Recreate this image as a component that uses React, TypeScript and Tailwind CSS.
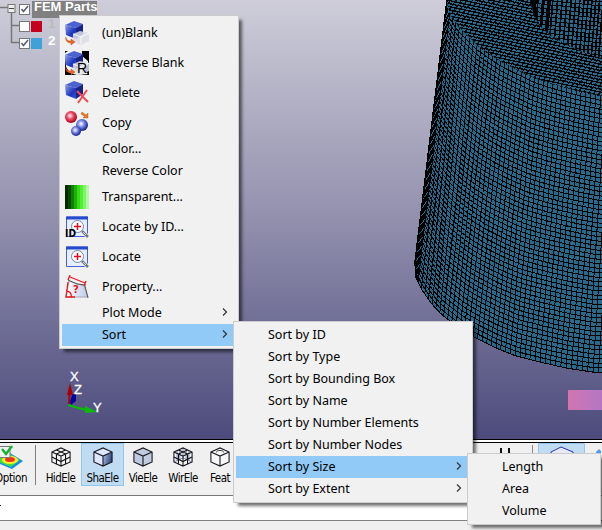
import React from "react";

type Pt = [number, number];

// Interpolates a y value on a polyline at the given x.
const yAt = (pts: Pt[], x: number): number => {
  for (let i = 1; i < pts.length; i++) {
    if (x <= pts[i][0]) {
      const [x0, y0] = pts[i - 1];
      const [x1, y1] = pts[i];
      return y0 + ((x - x0) / (x1 - x0)) * (y1 - y0);
    }
  }
  return pts[pts.length - 1][1];
};

const topRim: Pt[] = [[447, 2], [449, 12], [458, 26], [467, 35], [477, 45], [488, 53], [502, 62], [518, 70], [535, 78], [553, 84], [575, 90], [606, 97]];
const bottomRim: Pt[] = [[415, 262], [416, 278], [422, 290], [431, 303], [441, 314], [450, 321], [462, 330], [476, 338], [496, 348], [516, 356], [540, 362], [566, 368], [592, 372], [606, 372]];
const innerRim: Pt[] = [[530, 0], [533, 12], [539, 25], [549, 34], [562, 42], [580, 51], [606, 60]];

// Columns of the outer wall get wider away from the silhouette.
const columns: number[] = [0];
while (columns[columns.length - 1] < 190) {
  const s = columns[columns.length - 1];
  columns.push(s + Math.min(5.4, 3 + Math.sqrt(s) * 0.19));
}

const wallPoint = (s: number, t: number): Pt => {
  const xt = 447 + s * 0.92;
  const xb = 415 + s;
  const yt = yAt(topRim, xt);
  const yb = yAt(bottomRim, xb);
  return [xt + (xb - xt) * t, yt + (yb - yt) * t];
};

const toPath = (pts: Pt[]) => "M" + pts.map((p) => p[0].toFixed(1) + " " + p[1].toFixed(1)).join("L");

const Mesh = () => {
  const wallCols = columns.map((s) => toPath([wallPoint(s, 0), wallPoint(s, 1)])).join("");
  const wallRows = Array.from({ length: 62 }, (_, i) => toPath(columns.map((s) => wallPoint(s, i / 61)))).join("");
  const ringRows = Array.from({ length: 44 }, (_, i) => {
    const y = i * 3.1 - 48;
    return `M440 ${y}L606 ${y + 36}`;
  }).join("");
  const ringCols = Array.from({ length: 60 }, (_, i) => `M${436 + i * 5.5} -2l-100 130`).join("");
  const holeCols = Array.from({ length: 17 }, (_, i) => `M${538 + i * 5.1 - i * i * 0.05} 0l-5 62`).join("");
  const holeRows = Array.from({ length: 22 }, (_, i) => `M526 ${i * 4.1 - 18}L606 ${i * 4.1 - 10}`).join("");
  return (
    <svg className="absolute left-0 top-0" width="602" height="439" shapeRendering="crispEdges">
      <defs>
        <clipPath id="wall">
          <path d={toPath([...topRim, ...[...bottomRim].reverse()]) + "Z"} />
        </clipPath>
        <clipPath id="ring">
          <path d={"M447 0" + toPath(topRim).replace("M", "L") + "L606 0Z"} />
        </clipPath>
        <clipPath id="hole">
          <path d={toPath(innerRim) + "L606 0Z"} />
        </clipPath>
      </defs>
      <g clipPath="url(#ring)" fill="none">
        <rect x="440" width="162" height="100" fill="#286a8c" />
        <path d={ringRows} stroke="#000" strokeWidth="1.3" />
        <path d={ringCols} stroke="#000" strokeWidth="1" />
      </g>
      <g clipPath="url(#hole)" fill="none">
        <rect x="525" width="77" height="62" fill="#286a8c" />
        <path d={holeCols} stroke="#000" strokeWidth="1.7" />
        <path d={holeRows} stroke="#000" strokeWidth="1" />
        <path d="M529 0h8l-1 9 3 15h-4zM542 0h3l-3 30h-3zM549 0h2l-3 34h-3z" fill="#000" />
      </g>
      <g clipPath="url(#wall)" fill="none">
        <rect x="410" width="192" height="376" fill="#286a8c" />
        <path d={wallCols} stroke="#000" strokeWidth="1" />
        <path d={wallRows} stroke="#000" strokeWidth="1" />
      </g>
      <path d="M447 0L415 262L416 278" fill="none" stroke="#000" strokeWidth="1.500" />
      <path d={toPath(bottomRim)} fill="none" stroke="#000" />
    </svg>
  );
};

const Cube = ({ kind }: { kind: string }) => (
  <svg width="24" height="24" viewBox="0 0 24 24" className="block">
    <defs>
      <linearGradient id="face" x1="0" y1="0" x2="1" y2="1">
        <stop offset="0" stopColor="#8fa0e8" />
        <stop offset=".6" stopColor="#1d35bd" />
        <stop offset="1" stopColor="#3555e0" />
      </linearGradient>
    </defs>
    {kind === "reverse" && <path d="M0 0h24v24H0z" fill="#000" />}
    {kind === "reverse" && <path d="M0 2l3-2h14v5l6 5v4l-3 3v3l3 3-11 1-7-2-4-6z" fill="#f1f1f1" />}
    <path d="M0 4L9 0l9 3-7 4z" fill="#4a63d0" />
    <path d="M0 4l11 3v11L1 14z" fill="url(#face)" />
    <path d="M11 7l7-4v10l-7 5z" fill="#172482" />
    {kind !== "delete" && (
      <>
        <path d="M8 13l7-3 9 2v8l-8 4-8-3z" fill="#dcdde4" fillOpacity=".86" />
        <path d="M8 13l8 3 8-4M16 16v7" fill="none" stroke="#fff" strokeOpacity=".8" />
        <path d="M1 16c0 3 2 4 5 4v-2l4 3-4 3v-2c-4 0-6-3-5-6z" fill="#e86420" stroke="#ad451c" strokeWidth=".4" />
      </>
    )}
    {kind === "reverse" && <text x="12" y="22" fontSize="14" className="font-['Liberation_Sans']">R</text>}
    {kind === "delete" && <path d="M12 10l11 11M22 9l-9 13" stroke="#f04b54" strokeWidth="2" fill="none" />}
  </svg>
);

const CopyIcon = () => (
  <svg width="24" height="25" viewBox="0 0 24 25" className="block">
    <defs>
      <radialGradient id="red" cx=".42" cy=".4" r=".6">
        <stop stopColor="#fff" /><stop offset=".45" stopColor="#ef5068" /><stop offset="1" stopColor="#a70018" />
      </radialGradient>
      <radialGradient id="blue" cx=".42" cy=".4" r=".6">
        <stop stopColor="#fff" /><stop offset=".5" stopColor="#7080dc" /><stop offset="1" stopColor="#10218f" />
      </radialGradient>
    </defs>
    <circle cx="6" cy="6" r="6" fill="url(#red)" />
    <circle cx="17" cy="14" r="6" fill="url(#blue)" />
    <circle cx="11" cy="20" r="5" fill="url(#blue)" />
    <path d="M17 1l4 3 2-2v5h-5l1.500-1.500L16 3z" fill="#ed7824" stroke="#a85220" strokeWidth=".4" />
  </svg>
);

const LocateIcon = ({ withId = false }: { withId?: boolean }) => (
  <svg width="24" height="24" viewBox="0 0 24 24" className="block">
    <path d="M1.500 2h21v19.500h-21z" fill="#e7efff" stroke="#4361dc" />
    <path d="M1 1.500h22v3H1z" fill="#2549cf" />
    <path d="M17 16l5 5" stroke="#f7f8fa" strokeWidth="4" />
    <path d="M17 16l6 6" stroke="#70777f" strokeWidth="2.500" />
    <path d="M18 17l3 3" stroke="#d9dce0" strokeWidth="1" />
    <circle cx="12.500" cy="11.500" r="6" fill="#fff" stroke="#7488a4" />
    <path d="M9 11.500h7M12.500 8v7" stroke="#e01020" strokeWidth="1.500" />
    {withId && <text x="0" y="22" fontSize="11" textLength="11" lengthAdjust="spacingAndGlyphs" className="font-['DejaVu_Sans'] font-bold">ID</text>}
  </svg>
);

const PropertyIcon = () => (
  <svg width="24" height="24" viewBox="0 0 24 24" className="block">
    <defs><linearGradient id="sheet"><stop stopColor="#fff" /><stop offset="1" stopColor="#b9cbe9" /></linearGradient></defs>
    <path d="M4 6l15 5 4 11H1z" fill="url(#sheet)" stroke="#a5a7ac" />
    <path d="M3 5l9 4 9 1M20 11l3 12" fill="none" stroke="#555" />
    <path d="M5 2l15 6M5 0L3 5M21 6l-2 5M3 7L1 22h9M1 16c3 0 6 2 5 6" fill="none" stroke="#ee1721" strokeWidth="1.300" />
    <text x="8" y="18" fontSize="10" fill="#ec1018" className="font-['DejaVu_Sans'] font-bold">?</text>
  </svg>
);

const TransparentIcon = () => (
  <div className="flex size-6">
    {["bg-[#022900]", "bg-[#084b00]", "bg-[#108000]", "bg-[#20ae08]", "bg-[#32dd17]", "bg-[#54ee36]", "bg-[#83f36c]", "bg-[#b4f8a8]"].map((c) => <div key={c} className={`w-[3px] ${c}`} />)}
  </div>
);

const Arrow = () => (
  <svg width="6" height="8" viewBox="0 0 6 8" className="mb-[2px] mr-[8px]">
    <path d="M1 .5L4.500 4L1 7.500" fill="none" stroke="#333" strokeWidth="1.200" />
  </svg>
);

type Item = { label: string; icon?: React.ReactNode; arrow?: boolean; active?: boolean };

const Menu = ({ items, place, gutter }: { items: Item[]; place: string; gutter: string }) => (
  <div className={`absolute border border-[#ccc] bg-[#f1f1f1] p-[2px] shadow-[4px_4px_3px_-1px_rgba(0,0,0,0.55)] ${place}`}>
    {items.map((it) => (
      <div key={it.label} className={`flex items-center ${it.icon ? "h-[30px]" : "h-[22px]"} ${it.active ? "bg-[#91c9f7]" : ""}`}>
        <div className={`pl-[3px] ${gutter}`}>{it.icon}</div>
        <div className="flex-1 whitespace-nowrap pl-[8px] leading-[20px]">{it.label}</div>
        {it.arrow && <Arrow />}
      </div>
    ))}
  </div>
);

const mainItems: Item[] = [
  { label: "(un)Blank", icon: <Cube kind="blank" /> },
  { label: "Reverse Blank", icon: <Cube kind="reverse" /> },
  { label: "Delete", icon: <Cube kind="delete" /> },
  { label: "Copy", icon: <CopyIcon /> },
  { label: "Color..." },
  { label: "Reverse Color" },
  { label: "Transparent...", icon: <TransparentIcon /> },
  { label: "Locate by ID...", icon: <LocateIcon withId /> },
  { label: "Locate", icon: <LocateIcon /> },
  { label: "Property...", icon: <PropertyIcon /> },
  { label: "Plot Mode", arrow: true },
  { label: "Sort", arrow: true, active: true },
];

const sortItems: Item[] = [
  { label: "Sort by ID" },
  { label: "Sort by Type" },
  { label: "Sort by Bounding Box" },
  { label: "Sort by Name" },
  { label: "Sort by Number Elements" },
  { label: "Sort by Number Nodes" },
  { label: "Sort by Size", arrow: true, active: true },
  { label: "Sort by Extent", arrow: true },
];

const sizeItems: Item[] = [{ label: "Length" }, { label: "Area" }, { label: "Volume" }];

const BoxIcon = ({ kind }: { kind: string }) => (
  <svg width="22" height="22" viewBox="0 0 22 22" className="block">
    <defs>
      <linearGradient id="shade" x1="0" y1="0" x2="1" y2=".4"><stop stopColor="#b4c4ec" /><stop offset="1" stopColor="#33487c" /></linearGradient>
    </defs>
    <path d="M1 5.500L11 1l10 4.500v11L11 21L1 16.500z" fill={kind === "ShaEle" ? "#e0e8ff" : kind === "VieEle" ? "#c1cbe0" : "#f7f7f7"} />
    {kind === "ShaEle" && <path d="M11 10l10-4.500v11L11 21z" fill="url(#shade)" />}
    {kind === "WirEle" && <path d="M1 16.500L11 12l10 4.500M11 1v11M4.500 4v11M7.500 3v11M14.500 3v11M17.500 4v11" fill="none" stroke="#7385b0" />}
    {(kind === "HidEle" || kind === "WirEle") && (
      <path d="M6 8v11M16 8v11M1 11l10 5 10-5M6 3.200l10 4.500M16 3.200l-10 4.500" fill="none" stroke="#111" strokeWidth="1.200" />
    )}
    <path d="M1 5.500L11 1l10 4.500v11L11 21L1 16.500zM1 5.500L11 10l10-4.500M11 10v11" fill="none" stroke="#1a1a22" strokeWidth="1.200" />
    {kind === "Feat" && <path d="M7 6c0-3 8-3 8 0" fill="none" stroke="#222" />}
  </svg>
);

const Tool = ({ name, width, active }: { name: string; width: string; active?: boolean }) => (
  <div className={`flex h-[43px] flex-col items-center border pt-[3px] ${width} ${active ? "border-[#91c7ef] bg-[#c0dcf3]" : "border-transparent"}`}>
    <BoxIcon kind={name} />
    <span className="mt-[4px] whitespace-nowrap font-['DejaVu_Sans_Condensed','DejaVu_Sans',sans-serif] text-[11.5px] leading-[14px] tracking-[-0.55px]">{name}</span>
  </div>
);

const Check = ({ on }: { on?: boolean }) => (
  <div className="size-[11px] border border-[#777] bg-white">
    {on && <svg width="9" height="9" viewBox="0 0 9 9"><path d="M1.500 4L3.500 6.500L8 1" fill="none" stroke="#555a70" strokeWidth="1.500" /></svg>}
  </div>
);

const Tree = () => (
  <div className="relative flex flex-col font-['Liberation_Sans',sans-serif] font-bold">
    <svg className="absolute left-0 top-0" width="32" height="50">
      <path d="M0 7.500h8M11.500 13v30M11 25.500h8M11 42.500h8" stroke="#777" strokeWidth="1.500" fill="none" />
      <rect x="8" y="4.500" width="7" height="8" fill="#eee" stroke="#777" />
      <path d="M9 8.500h5" stroke="#444" />
    </svg>
    <div className="flex h-[17px] items-center pl-[19px] pt-[1px]">
      <Check on />
      <div className="ml-[2px] h-[17px] w-[65px] whitespace-nowrap bg-[#808080] pl-[2px] text-[13px] leading-[12px] text-white">FEM Parts</div>
    </div>
    <div className="flex h-[18px] items-center pl-[19px]">
      <Check />
      <div className="ml-[1px] size-[11px] bg-[#c6001c]" />
      <div className="ml-[6px] pb-[5px] text-[13.5px] leading-[13px] text-[#bbb]">1</div>
    </div>
    <div className="flex h-[16px] items-center pl-[19px]">
      <Check on />
      <div className="ml-[1px] size-[11px] bg-[#40a0d8]" />
      <div className="ml-[6px] pb-[5px] text-[13.5px] leading-[13px] text-white">2</div>
    </div>
  </div>
);

const Axes = () => (
  <svg className="absolute left-[64px] top-[366px] font-['Liberation_Sans']" width="44" height="50">
    <path d="M4 39l1-19 2 0-1 18z" fill="#b00000" />
    <path d="M3 29l3-12 3 12z" fill="#a80000" />
    <path d="M6 36l2-7 4-2v8l-5 4z" fill="#0000a0" />
    <path d="M4 39l18 5" stroke="#00c000" strokeWidth="2" />
    <path d="M21 40l13 6-13 1z" fill="#0cb80c" />
    <g fill="#fff" stroke="#fff" strokeWidth=".3" fontSize="13">
      <text x="6" y="15">X</text><text x="10" y="28">Z</text><text x="29" y="46">Y</text>
    </g>
  </svg>
);

export default function App() {
  return (
    <div className="relative flex h-[530px] w-[602px] flex-col overflow-hidden bg-[#f0f0f0] font-['Noto_Sans',sans-serif] text-[12.5px] text-black">
      <div className="relative h-[439px] shrink-0 overflow-hidden bg-linear-to-b from-[#cecdd9] via-[#9290ad] to-[#4d4b7c]">
        <Mesh />
        <Tree />
        <Axes />
        <div className="absolute left-[568px] top-[390px] h-[20px] w-[34px] bg-linear-to-r from-[#d175b0] to-[#b675c5]" />
      </div>
      <div className="h-[4px] shrink-0 border-y border-black bg-white" />
      <div className="flex h-[53px] shrink-0 border-b border-[#777] bg-[#f0f0f0]">
        <div className="relative w-[36px] border-r border-transparent">
          <svg width="25" height="25" className="absolute left-0 top-[2px]">
            <path d="M-10 15L10 8l13 8-11 8z" fill="#168bec" />
            <path d="M-6 15L10 9l10 6-9 7z" fill="#42dd43" />
            <ellipse cx="10" cy="15" rx="8" ry="4" fill="#f7ef27" />
            <ellipse cx="10" cy="14.500" rx="5" ry="2.500" fill="#f03318" />
            <path d="M-4 1.500H10v11H-4z" fill="#f1f1f1" stroke="#777" />
            <path d="M2 4l4 5 6-8" fill="none" stroke="#16b233" strokeWidth="2.500" />
          </svg>
          <span className="absolute left-[-5px] top-[28px] font-['DejaVu_Sans_Condensed','DejaVu_Sans',sans-serif] text-[11.5px] leading-[14px] tracking-[-0.4px]">Option</span>
          <div className="absolute left-[35px] top-[2px] h-[40px] w-px bg-[#808080]" />
        </div>
        <div className="w-[4px]" />
        <Tool name="HidEle" width="w-[41px]" />
        <Tool name="ShaEle" width="w-[43px]" active />
        <Tool name="VieEle" width="w-[38px]" />
        <Tool name="WirEle" width="w-[42px]" />
        <Tool name="Feat" width="w-[32px]" />
        <div className="flex flex-1 pl-[263px]">
          <svg width="102" height="14" className="block">
            <path d="M2 5v9M10 5v9" stroke="#111" strokeWidth="2" />
            <path d="M33.500 2v12" stroke="#888" />
            <path d="M39.500 14V.5h46V14" fill="#c0dcf3" stroke="#91c7ef" />
            <path d="M52 9l10-5 12 5v5H52z" fill="#e6eaff" stroke="#2730a8" />
            <path d="M97 9l3-3 2 2v6h-4z" fill="#4a9df0" />
          </svg>
        </div>
      </div>
      <div className="h-[25px] shrink-0 border-b border-[#808080] bg-white pt-[9px]">
        <div className="h-px w-px bg-[#001080]" />
      </div>
      <Menu items={mainItems} gutter="w-[32px]" place="left-[59px] top-[15px] w-[180px]" />
      <Menu items={sortItems} gutter="w-[24px]" place="left-[233px] top-[321px] w-[240px]" />
      <Menu items={sizeItems} gutter="w-[24px]" place="left-[467px] top-[453px] w-[134px]" />
    </div>
  );
}
